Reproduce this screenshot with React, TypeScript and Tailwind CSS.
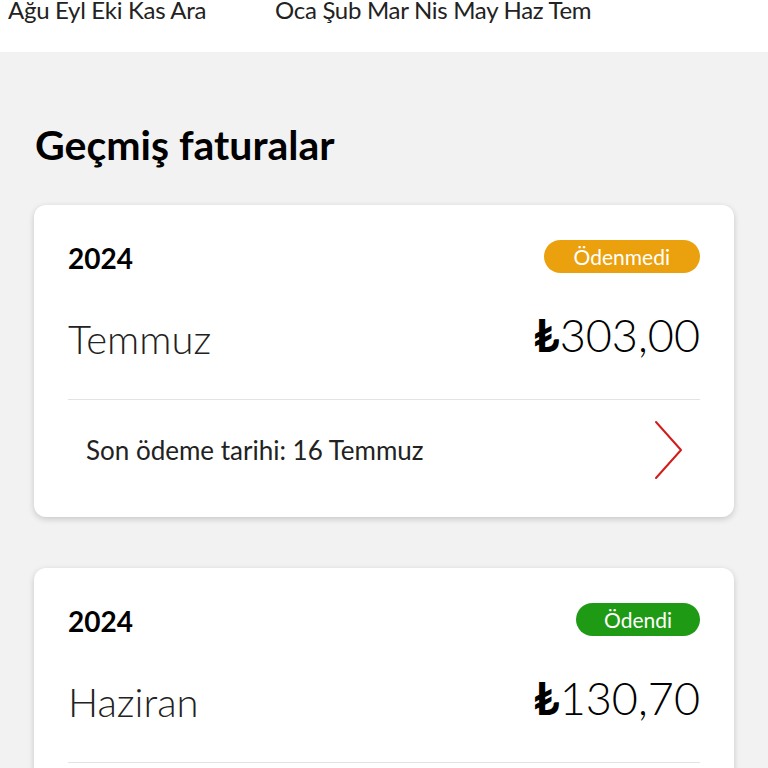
type Bill = {
  year: string;
  month: string;
  amount: string;
  paid: boolean;
  due: string;
};

const bills: Bill[] = [
  { year: "2024", month: "Temmuz", amount: "303,00", paid: false, due: "16 Temmuz" },
  { year: "2024", month: "Haziran", amount: "130,70", paid: true, due: "16 Haziran" },
];

function Chevron() {
  return (
    <svg width="30" height="60" viewBox="0 0 30 60" fill="none">
      <polyline points="2,2 27,30 2,58" stroke="#d21c1c" strokeWidth="2" strokeLinecap="round" strokeLinejoin="round" />
    </svg>
  );
}

function BillCard({ bill }: { bill: Bill }) {
  return (
    <div className="bg-white rounded-[12px] shadow-[0_2px_6px_rgba(0,0,0,0.18)] px-[34px] pt-[36px] pb-[17px]">
      <div className="flex items-center justify-between h-[34px]">
        <span className="text-[28px] font-bold text-black">{bill.year}</span>
        <span
          className={
            bill.paid
              ? "bg-[#1f9a14] text-white text-[21px] leading-[33px] h-[33px] px-[28px] rounded-full -mt-[4px]"
              : "bg-[#eba10e] text-white text-[21px] leading-[33px] h-[33px] px-[30px] rounded-full -mt-[4px]"
          }
        >
          {bill.paid ? "Ödendi" : "Ödenmedi"}
        </span>
      </div>
      <div className="flex items-center justify-between mt-[33px] h-[56px]">
        <span className="text-[40px] font-light text-[#222] pt-[6px]">{bill.month}</span>
        <span className="text-[45px] font-light text-black">
          <span className="font-bold">₺</span>
          {bill.amount}
        </span>
      </div>
      <div className="border-t border-[#e3e3e3] mt-[35px]" />
      <div className="flex items-center justify-between h-[100px] pl-[18px] pr-[16px]">
        <span className="text-[26px] text-[#222]">Son ödeme tarihi: {bill.due}</span>
        <Chevron />
      </div>
    </div>
  );
}

export default function App() {
  return (
    <div className="w-[768px] h-[768px] overflow-hidden bg-[#f2f2f2] font-['Lato','Open_Sans',sans-serif]">
      <div className="bg-white h-[52px] overflow-hidden">
        <div className="flex text-[24px] text-[#222] -mt-[8px] pl-[8px] tracking-[-0.3px]">
          <span className="w-[267px]">Ağu Eyl Eki Kas Ara</span>
          <span>Oca Şub Mar Nis May Haz Tem</span>
        </div>
      </div>
      <div className="px-[34px]">
        <h1 className="text-[41px] font-bold text-black mt-[68px] leading-[50px] pl-[1px]">Geçmiş faturalar</h1>
        <div className="flex flex-col gap-[51px] mt-[35px]">
          {bills.map((bill) => (
            <BillCard key={bill.month} bill={bill} />
          ))}
        </div>
      </div>
    </div>
  );
}
